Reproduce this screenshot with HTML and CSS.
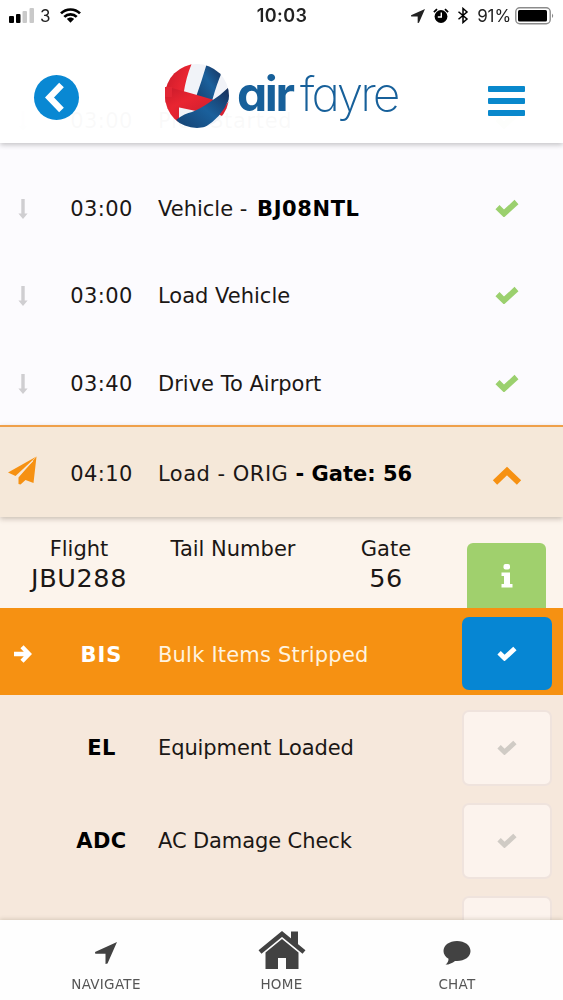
FILE: index.html
```html
<!DOCTYPE html>
<html lang="en">

<head>
    <meta charset="UTF-8">
    <meta name="viewport" content="width=device-width, initial-scale=1.0">
    <title>Air Fayre</title>
    <link rel="stylesheet" href="styles.css">
</head>

<body>
    <svg class="symbols" width="0" height="0">
        <symbol id="check" viewBox="0 0 24 18">
            <path d="M2.5 8.200 9 14.500 21.500 3" fill="none" stroke="currentColor" stroke-width="5.800" />
        </symbol>
        <symbol id="down" viewBox="0 0 10 22">
            <path d="M3.300 1h3.400v14.500H9.600L5 21 .4 15.500h2.900z" fill="currentColor" />
        </symbol>
        <symbol id="location" viewBox="0 0 22 22">
            <path d="M22 0 12.500 21.500 10.500 22V11.800H.3L0 10z" fill="currentColor" />
        </symbol>
    </svg>

    <header class="header">
        <div class="status-bar">
            <div class="status-left">
                <svg width="26" height="15" viewBox="0 0 26 15">
                    <rect x="0" y="8" width="5" height="7" rx="1" />
                    <rect x="7" y="6" width="4.5" height="9" rx="1" />
                    <rect x="13.5" y="3" width="4.5" height="12" rx="1" fill="#c9c9c9" />
                    <rect x="20.5" y="0" width="4.5" height="15" rx="1" fill="#c9c9c9" />
                </svg>
                <span class="carrier">3</span>
                <svg width="21" height="15" viewBox="0 0 21 15">
                    <g fill="none" stroke="#000" stroke-width="2.7">
                        <path d="M1 5.4C6.2.2 14.800.2 20 5.400" />
                        <path d="M4.300 8.900C7.700 5.400 13.300 5.400 16.700 8.900" />
                    </g>
                    <path d="M6.900 11C9 9 12 9 14.100 11L10.500 14.700z" />
                </svg>
            </div>
            <div class="status-time">10:03</div>
            <div class="status-right">
                <svg width="14" height="14"><use href="#location" /></svg>
                <svg width="16" height="15" viewBox="0 0 16 15">
                    <circle cx="8" cy="8.500" r="6.400" />
                    <path d="M.9 4.200 4 1.200M15.100 4.200 12 1.200" stroke="#000" stroke-width="1.800" />
                    <path d="M8.300 4.500V9H4.800" fill="none" stroke="#fff" stroke-width="1.400" />
                </svg>
                <svg width="12" height="17" viewBox="0 0 12 17">
                    <path d="M1.500 4.700 10 12 6 15.500V1.500L10 5 1.500 12.300" fill="none" stroke="#000" stroke-width="1.500" />
                </svg>
                <span class="percent">91%</span>
                <svg width="40" height="18" viewBox="0 0 40 18">
                    <rect x=".8" y=".8" width="34.400" height="16" rx="4" fill="#fff" stroke="#8b8b8b" stroke-width="1.400" />
                    <rect x="3" y="3" width="29" height="11.600" rx="1.500" />
                    <path d="M37 6.500q2.400 2.300 0 4.600z" fill="#8b8b8b" />
                </svg>
            </div>
        </div>
        <div class="nav-bar">
            <a class="back" href="#">
                <svg width="20" height="31" viewBox="0 0 20 31">
                    <path d="M16.500 3 4.500 15.500 16.500 28" fill="none" stroke="#fff" stroke-width="6.500" />
                </svg>
            </a>
            <div class="logo">
                <svg width="66" height="66" viewBox="0 0 66 66">
                    <defs>
                        <clipPath id="ball"><circle cx="33" cy="33" r="32" /></clipPath>
                        <linearGradient id="red" x2="1" y2="1">
                            <stop offset="0" stop-color="#c51a2a" />
                            <stop offset=".5" stop-color="#e92531" />
                            <stop offset="1" stop-color="#cf1f2f" />
                        </linearGradient>
                        <linearGradient id="blue" x1="0" x2="1" y1="1" y2="0">
                            <stop offset="0" stop-color="#15406f" />
                            <stop offset=".5" stop-color="#1a609c" />
                            <stop offset="1" stop-color="#182c54" />
                        </linearGradient>
                    </defs>
                    <g clip-path="url(#ball)">
                        <path fill="#f1f3f8" d="M0 0h66v66H0z" />
                        <path fill="url(#blue)" d="M43 0 58 9Q53 20 48 38L32 34Q38 17 43 0z" />
                        <path fill="url(#red)" d="M0 0H28Q22 14 19.500 31L15 44V57L12 62H0z" />
                        <path fill="url(#red)" d="M0 23Q20 28 50 37Q43 46 32 48L13 44 0 39z" />
                        <path fill="#d92232" d="M54 51 66 37V57z" />
                        <path fill="url(#blue)" d="M66 23Q56 33 46 39Q36 46 28 49Q21 50 12 57L18 66H38Q58 55 66 34z" />
                    </g>
                    <path fill="#e12634" d="M1 24h7v10H1z" />
                </svg>
                <span class="logo-air">air</span>
                <span class="logo-fayre">fayre</span>
            </div>
            <a class="menu" href="#">
                <span></span>
                <span></span>
                <span></span>
            </a>
        </div>
    </header>

    <main class="content">
        <div class="row">
            <svg class="arrow" width="10" height="22"><use href="#down" /></svg>
            <div class="time">03:00</div>
            <div class="label passed">Pick Started</div>
            <svg class="done" width="24" height="18"><use href="#check" /></svg>
        </div>
        <div class="row">
            <svg class="arrow" width="10" height="22"><use href="#down" /></svg>
            <div class="time">03:00</div>
            <div class="label">Vehicle - <b class="vehicle">BJ08NTL</b></div>
            <svg class="done" width="24" height="18"><use href="#check" /></svg>
        </div>
        <div class="row">
            <svg class="arrow" width="10" height="22"><use href="#down" /></svg>
            <div class="time">03:00</div>
            <div class="label">Load Vehicle</div>
            <svg class="done" width="24" height="18"><use href="#check" /></svg>
        </div>
        <div class="row">
            <svg class="arrow" width="10" height="22"><use href="#down" /></svg>
            <div class="time">03:40</div>
            <div class="label">Drive To Airport</div>
            <svg class="done" width="24" height="18"><use href="#check" /></svg>
        </div>

        <div class="row current">
            <svg class="plane" width="29" height="29" viewBox="0 0 29 29">
                <path fill="#f69112" d="M28.500.5 0 16.500 7.500 20z" />
                <path fill="#f69112" d="M28.500.5 25.500 27 17.500 24 12.500 28.500 10.500 28V21.500z" />
                <path d="M25 5 9 21.500" stroke="#f5e8d9" stroke-width=".8" />
            </svg>
            <div class="time">04:10</div>
            <div class="label">Load - ORIG <b>- Gate: 56</b></div>
            <svg class="collapse" width="30" height="20" viewBox="0 0 30 20">
                <path d="M3 16.500 15 5 27 16.500" fill="none" stroke="#f69112" stroke-width="6.200" />
            </svg>
        </div>

        <div class="flight">
            <div class="field flight-no">
                <div class="field-name">Flight</div>
                <div class="field-value">JBU288</div>
            </div>
            <div class="field tail-no">
                <div class="field-name">Tail Number</div>
            </div>
            <div class="field gate-no">
                <div class="field-name">Gate</div>
                <div class="field-value">56</div>
            </div>
            <a class="info" href="#">
                <svg width="12" height="24" viewBox="0 0 12 24">
                    <rect x="2.500" y="0" width="6.500" height="5.500" rx="2" fill="#fff" />
                    <path fill="#fff" d="M.5 8.500H9V20h2.500v3.500H.5V20H3v-8H.5z" />
                </svg>
            </a>
        </div>

        <div class="row task active">
            <svg width="18" height="18" viewBox="0 0 18 18">
                <path d="M0 9H15M8 1.800 15 9 8 16.200" fill="none" stroke="#fff" stroke-width="4.400" />
            </svg>
            <div class="time">BIS</div>
            <div class="label">Bulk Items Stripped</div>
            <a class="tick" href="#"><svg width="20" height="15"><use href="#check" /></svg></a>
        </div>
        <div class="tasks">
            <div class="row task">
                <span></span>
                <div class="time">EL</div>
                <div class="label">Equipment Loaded</div>
                <a class="tick" href="#"><svg width="20" height="15"><use href="#check" /></svg></a>
            </div>
            <div class="row task">
                <span></span>
                <div class="time">ADC</div>
                <div class="label">AC Damage Check</div>
                <a class="tick" href="#"><svg width="20" height="15"><use href="#check" /></svg></a>
            </div>
            <div class="row task">
                <span></span>
                <span></span>
                <span></span>
                <a class="tick" href="#"></a>
            </div>
        </div>
    </main>

    <footer class="tab-bar">
        <a class="tab" href="#">
            <span class="tab-icon"><svg width="22" height="22"><use href="#location" /></svg></span>
            <span class="tab-name">NAVIGATE</span>
        </a>
        <a class="tab" href="#">
            <span class="tab-icon home">
                <svg width="48" height="40" viewBox="0 0 48 40" fill="#424242">
                    <path d="M2 22 24 4 46 22" fill="none" stroke="#424242" stroke-width="4.600" />
                    <path d="M33 1.500h7v14l-7-6z" />
                    <path d="M7.500 22.500 24 9 40.500 22.500V39H28V28h-8v11H7.500z" />
                </svg>
            </span>
            <span class="tab-name">HOME</span>
        </a>
        <a class="tab" href="#">
            <span class="tab-icon">
                <svg width="28" height="24" viewBox="0 0 28 24">
                    <path fill="#424242" d="M14 0C21.700 0 27.500 4.300 27.500 10S21.700 20 14 20l-2-.1C9.500 22 6 23.500 2.500 23.600 4.500 22 5.600 20 5.500 17.700 2.300 15.800.5 13.200.5 10 .5 4.300 6.300 0 14 0z" />
                </svg>
            </span>
            <span class="tab-name">CHAT</span>
        </a>
    </footer>
</body>

</html>
```
FILE: styles.css
```css
* {
    box-sizing: border-box;
}

body {
    margin: 0;
    height: 1000px;
    overflow: hidden;
    font-family: Verdana, "DejaVu Sans", sans-serif;
    font-size: 21px;
    color: #1b1715;
    background: #fcfbfe;
}

svg {
    display: block;
    flex-shrink: 0;
}

a {
    color: inherit;
    text-decoration: none;
}

.symbols {
    position: absolute;
}

.header {
    position: fixed;
    top: 0;
    left: 0;
    right: 0;
    height: 143px;
    background: rgba(255, 255, 255, 0.975);
    box-shadow: 0 2px 5px rgba(0, 0, 0, 0.22);
    z-index: 2;
}

.status-bar {
    display: grid;
    grid-template-columns: 1fr auto 1fr;
    align-items: center;
    height: 31px;
    padding: 0 8px 0 9px;
    font-family: Inter, "Liberation Sans", sans-serif;
    font-size: 17px;
    color: #222;
}

.status-left,
.status-right {
    display: flex;
    align-items: center;
}

.carrier {
    width: 11px;
    margin: 0 9px 0 5px;
}

.status-time {
    font-weight: 600;
    font-size: 18px;
    letter-spacing: 0.4px;
}

.status-right {
    justify-content: flex-end;
    gap: 8px;
}

.percent {
    letter-spacing: -0.1px;
    margin: 0 -4px 0 0;
}

.nav-bar {
    display: flex;
    align-items: center;
    justify-content: space-between;
    height: 112px;
    padding: 0 38px 0 34px;
}

.back {
    display: flex;
    align-items: center;
    justify-content: center;
    width: 45px;
    height: 45px;
    margin-top: 20px;
    padding-right: 4px;
    border-radius: 50%;
    background: #0988d3;
}

.logo {
    display: flex;
    align-items: center;
    width: 235px;
    margin: 18px 4px 0 0;
    color: #17609a;
    white-space: nowrap;
    font-family: Inter, Lato, sans-serif;
    font-size: 48px;
    line-height: 60px;
    font-feature-settings: "cv11";
}

.logo-air {
    width: 56px;
    margin: -4px 7px 0 7px;
    font-weight: 700;
    letter-spacing: -2.4px;
}

.logo-fayre {
    margin-top: -4px;
    font-weight: 200;
    letter-spacing: -3px;
}

.menu {
    display: flex;
    flex-direction: column;
    gap: 6px;
    width: 37px;
    margin-top: 27px;
}

.menu span {
    height: 6px;
    border-radius: 1px;
    background: #0988cc;
}

.content {
    padding-top: 75px;
}

.row {
    display: grid;
    grid-template-columns: 45px 113px 1fr 113px;
    align-items: center;
    height: 87.5px;
    padding-top: 5px;
}

.row > svg {
    justify-self: center;
}

.row .time {
    text-align: center;
    letter-spacing: 0.4px;
}

.row .label {
    white-space: nowrap;
}

.row .passed {
    letter-spacing: 0.7px;
}

.row b {
    color: #000;
}

.vehicle {
    margin-left: 3px;
    letter-spacing: 0.6px;
}

.arrow {
    color: #cfced1;
}

.done {
    margin-top: -2px;
    color: #9bd06e;
}

.current {
    position: relative;
    height: 92px;
    padding-top: 3px;
    border-top: 2px solid #efa04a;
    background: #f5e8d9;
    box-shadow: 0 2px 5px rgba(60, 40, 20, 0.25);
}

.current .label {
    letter-spacing: 0.5px;
}

.current b {
    letter-spacing: 0;
}

.plane {
    margin-top: -7px;
}

.collapse {
    margin-top: 5px;
}

.flight {
    display: grid;
    grid-template-columns: 158px 150px 156px 1fr;
    height: 91px;
    padding-top: 18px;
    text-align: center;
    background: #fcf4ec;
}

.field-name {
    line-height: 28px;
}

.field-value {
    font-size: 25.5px;
    line-height: 30px;
    letter-spacing: 0.6px;
}

.info {
    display: flex;
    align-items: center;
    justify-content: center;
    width: 79px;
    margin: 8px 0 0 3px;
    border-radius: 6px 6px 0 0;
    background: #a0d06d;
}

.task .time {
    font-weight: bold;
    color: #000;
}

.tick {
    display: flex;
    align-items: center;
    justify-content: center;
    justify-self: center;
    width: 90px;
    height: 76px;
    border: 2px solid #efe3dd;
    border-radius: 7px;
    background: #fcf3ed;
    color: #d0cbc5;
}

.row.active {
    height: 87px;
    padding-top: 4px;
    color: #fff3df;
    background: #f69112;
}

.active .label {
    padding-top: 2px;
    letter-spacing: 0.2px;
}

.active .time {
    padding-top: 2px;
    letter-spacing: 1px;
    color: #fff;
}

.active .tick {
    height: 73px;
    border: 0;
    background: #0686d3;
    color: #fff;
}

.tasks {
    height: 240px;
    padding-top: 6px;
    background: #f6e8dc;
}

.tasks .row {
    height: 93px;
    padding-top: 0;
}

.tasks .label {
    letter-spacing: -0.1px;
}

.tab-bar {
    position: fixed;
    bottom: 0;
    left: 0;
    right: 0;
    display: flex;
    justify-content: center;
    height: 80px;
    padding-top: 10px;
    background: #fefefe;
    box-shadow: 0 -1px 4px rgba(90, 80, 50, 0.2);
    z-index: 2;
}

.tab {
    display: flex;
    flex-direction: column;
    align-items: center;
    width: 175.5px;
    color: #424242;
}

.tab-icon {
    display: flex;
    align-items: center;
    height: 46px;
}

.tab-icon.home {
    align-items: flex-start;
}

.tab-name {
    font-size: 13.5px;
    line-height: 16px;
    letter-spacing: 0.3px;
    color: #555;
}
```
